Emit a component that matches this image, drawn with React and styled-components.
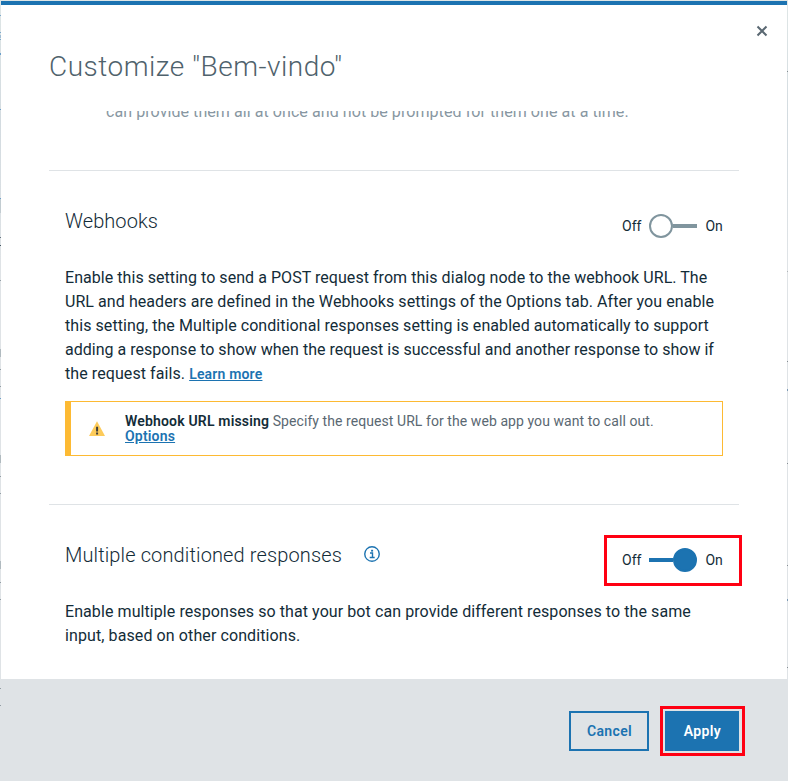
import React from 'react';
import styled, { createGlobalStyle } from 'styled-components';

const GlobalStyle = createGlobalStyle`
  * { box-sizing: border-box; }
  body { margin: 0; overflow: hidden; background: #dfe3e6; font-family: Roboto, "Liberation Sans", sans-serif; color: #132c38; }
  h1, h2, p { margin: 0; font-weight: 300; }
`;

const Backdrop = styled.div`
  width: 788px;
  height: 781px;
  padding: 1px 1px 0;
  background: linear-gradient(#dfe6e6, #d3dbe0 120px, #dfe3e6 260px, #dfe3e6);
`;

const Edge = styled.div`
  position: absolute;
  left: ${({ $x }) => $x}px;
  top: ${({ $y }) => $y}px;
  width: 1px;
  height: ${({ $h }) => $h}px;
  background: ${({ $color }) => $color};
`;

const Dialog = styled.div`
  height: 780px;
  display: flex;
  flex-direction: column;
  background: #fff;
  border-top: 4px solid #1c73b1;
`;

const Header = styled.header`
  height: 106px;
  flex: none;
  display: flex;
  justify-content: space-between;
  align-items: flex-start;
  padding: 20px 19px 0 48px;
`;

const Title = styled.h1`
  margin-top: 24px;
  font-size: 28px;
  line-height: 36px;
  letter-spacing: 0.5px;
  color: #4f626c;
`;

const CloseButton = styled.button`
  display: flex;
  border: 0;
  padding: 0;
  margin: 0;
  background: none;
`;

const ScrollArea = styled.main`
  height: 568px;
  flex: none;
  overflow: hidden;
  padding: 0 48px;
`;

const Fragment = styled.p`
  height: 59px;
  margin: -11px 0 11px;
  padding-left: 57px;
  white-space: nowrap;
  font-size: 16px;
  font-weight: 400;
  line-height: 24px;
  letter-spacing: 0.07px;
  color: #8897a2;
`;

const Section = styled.section`
  height: ${({ $height }) => $height}px;
  border-top: 1px solid #dfe3e6;
  padding: 30px 16px 0;
`;

const SectionHead = styled.div`
  display: flex;
  height: 65px;
`;

const Heading = styled.h2`
  margin-top: 5px;
  font-size: 20px;
  line-height: 30px;
  letter-spacing: ${({ $spacing }) => $spacing}px;
`;

const InfoIcon = styled.svg`
  margin: 11px 0 0 22px;
`;

const ToggleFrame = styled.div`
  display: flex;
  align-items: center;
  gap: 8px;
  height: 51px;
  width: 138px;
  flex: none;
  margin: 0 -19px 0 auto;
  padding: 0 0 1px 15px;
  border: 3px solid ${({ $marked }) => ($marked ? '#ff0012' : 'transparent')};
  font-size: 14px;
`;

const Switch = styled.span`
  display: flex;
  align-items: center;
  flex-direction: ${({ $on }) => ($on ? 'row-reverse' : 'row')};
  width: 48px;
  color: ${({ $on }) => ($on ? '#1c73b1' : '#80959e')};
`;

const Knob = styled.span`
  width: 24px;
  height: 24px;
  border: 2px solid currentColor;
  border-radius: 50%;
  background: ${({ $on }) => ($on ? 'currentColor' : '#fff')};
`;

const Track = styled.span`
  flex: 1;
  height: 4px;
  background: currentColor;
`;

const Copy = styled.p`
  font-size: 16px;
  font-weight: 400;
  line-height: 24px;
`;

const Line = styled.span`
  display: block;
  white-space: nowrap;
  letter-spacing: ${({ $spacing }) => $spacing}px;
`;

const Link = styled.a`
  font-size: 14px;
  font-weight: 600;
  letter-spacing: 0.18px;
  color: #1c73b1;
  text-decoration: underline;
`;

const Notice = styled.div`
  display: flex;
  align-items: flex-start;
  height: 55px;
  margin-top: 15px;
  padding: 12px 0 0 18px;
  border: 1px solid #fdba33;
  border-left-width: 6px;
`;

const WarningIcon = styled.svg`
  flex: none;
  margin: 7px 20px 0 0;
`;

const NoticeText = styled.div`
  font-size: 14px;
  line-height: 15px;
  letter-spacing: 0.07px;
  color: #5a6872;
`;

const Strong = styled.strong`
  font-weight: 600;
  letter-spacing: 0.18px;
  color: #132c38;
`;

const Footer = styled.footer`
  flex: 1;
  display: flex;
  justify-content: flex-end;
  align-items: flex-start;
  gap: 11px;
  padding: 27px 42px 0 0;
  background: #dfe3e6;
`;

const Button = styled.button`
  height: 40px;
  width: ${({ $primary }) => ($primary ? 74 : 80)}px;
  margin: ${({ $primary }) => ($primary ? 0 : '5px 0 0')};
  padding: 0 0 0 1px;
  border: 2px solid #1c73b1;
  background: ${({ $primary }) => ($primary ? '#1c73b1' : 'transparent')};
  color: ${({ $primary }) => ($primary ? '#fff' : '#1c73b1')};
  font: 600 14px Roboto, sans-serif;
  letter-spacing: 0.38px;
`;

const Highlight = styled.div`
  padding: 2px 3px 2px 2px;
  border: 3px solid #ff0012;
`;

const edgeMarks = [
  [0, 15, 1, '#7ba9cd'], [0, 32, 1, '#7ba9cd'], [0, 35, 3, '#a0bdd4'], [0, 39, 1, '#7ba9cd'], [0, 53, 2, '#6c9fca'],
  [0, 109, 1, '#6c9fca'], [0, 198, 1, '#6c9fca'], [0, 199, 14, '#c2ccd1'], [0, 237, 1, '#657580'], [0, 245, 1, '#455863'],
  [0, 280, 1, '#929da4'], [0, 349, 8, '#b0babf'], [0, 369, 1, '#929da4'], [0, 386, 1, '#929da4'], [0, 398, 1, '#6c9fca'],
  [0, 455, 8, '#b0babf'], [0, 476, 1, '#929da4'], [0, 493, 1, '#929da4'], [0, 561, 8, '#b0babf'], [0, 582, 1, '#929da4'],
  [0, 599, 1, '#929da4'], [0, 688, 1, '#929da4'], [0, 705, 1, '#929da4'],
  [787, 71, 1, '#858c91'], [787, 271, 1, '#b1b5b8'], [787, 361, 1, '#858c91'], [787, 389, 2, '#7d9bb6'], [787, 463, 1, '#858c91'],
  [787, 565, 1, '#858c91'], [787, 599, 2, '#7d9bb6'], [787, 667, 1, '#858c91'],
];

function Toggle({ on, marked }) {
  return (
    <ToggleFrame $marked={marked}>
      <span>Off</span>
      <Switch $on={on} role="switch" aria-checked={!!on}>
        <Knob $on={on} />
        <Track />
      </Switch>
      <span>On</span>
    </ToggleFrame>
  );
}

export default function App() {
  return (
    <>
      <GlobalStyle />
      <Backdrop>
        <Dialog role="dialog">
          <Header>
            <Title>Customize "Bem-vindo"</Title>
            <CloseButton aria-label="Close">
              <svg width="12" height="12" viewBox="0 0 12 12" fill="none" stroke="#5a6872" strokeWidth="2">
                <path d="M1.5 1.5 10.5 10.5M10.5 1.5 1.5 10.5" />
              </svg>
            </CloseButton>
          </Header>
          <ScrollArea>
            <Fragment>can provide them all at once and not be prompted for them one at a time.</Fragment>
            <Section $height={334}>
              <SectionHead>
                <Heading $spacing={0.08}>Webhooks</Heading>
                <Toggle />
              </SectionHead>
              <Copy>
                <Line $spacing={0.05}>Enable this setting to send a POST request from this dialog node to the webhook URL. The</Line>
                <Line $spacing={0.07}>URL and headers are defined in the Webhooks settings of the Options tab. After you enable</Line>
                <Line $spacing={0.07}>this setting, the Multiple conditional responses setting is enabled automatically to support</Line>
                <Line $spacing={0.02}>adding a response to show when the request is successful and another response to show if</Line>
                <Line $spacing={0.08}>the request fails. <Link>Learn more</Link></Line>
              </Copy>
              <Notice>
                <WarningIcon width="16" height="15" viewBox="0 0 16 15">
                  <path d="M8 .3 16 15H0Z" fill="#fdcb5a" />
                  <path d="M7.1 5.8h2v4.7h-2zM7.1 11.5h2v2h-2z" fill="#3d3d3a" />
                </WarningIcon>
                <NoticeText>
                  <Strong>Webhook URL missing</Strong> Specify the request URL for the web app you want to call out.
                  <br />
                  <Link>Options</Link>
                </NoticeText>
              </Notice>
            </Section>
            <Section $height={175}>
              <SectionHead>
                <Heading $spacing={0.13}>Multiple conditioned responses</Heading>
                <InfoIcon width="16" height="16" viewBox="0 0 16 16" fill="none" stroke="#1c73b1">
                  <circle cx="8" cy="8" r="7.25" strokeWidth="1.4" />
                  <path d="M6 7h2.5v4.5M5.7 11.5h5" strokeWidth="1.4" />
                  <path d="M7.1 4.7h2" strokeWidth="1.8" />
                </InfoIcon>
                <Toggle on marked />
              </SectionHead>
              <Copy>
                <Line $spacing={0.08}>Enable multiple responses so that your bot can provide different responses to the same</Line>
                <Line $spacing={0.1}>input, based on other conditions.</Line>
              </Copy>
            </Section>
          </ScrollArea>
          <Footer>
            <Button>Cancel</Button>
            <Highlight>
              <Button $primary>Apply</Button>
            </Highlight>
          </Footer>
        </Dialog>
        {edgeMarks.map(([x, y, h, color]) => (
          <Edge key={`${x}-${y}`} $x={x} $y={y} $h={h} $color={color} />
        ))}
      </Backdrop>
    </>
  );
}
